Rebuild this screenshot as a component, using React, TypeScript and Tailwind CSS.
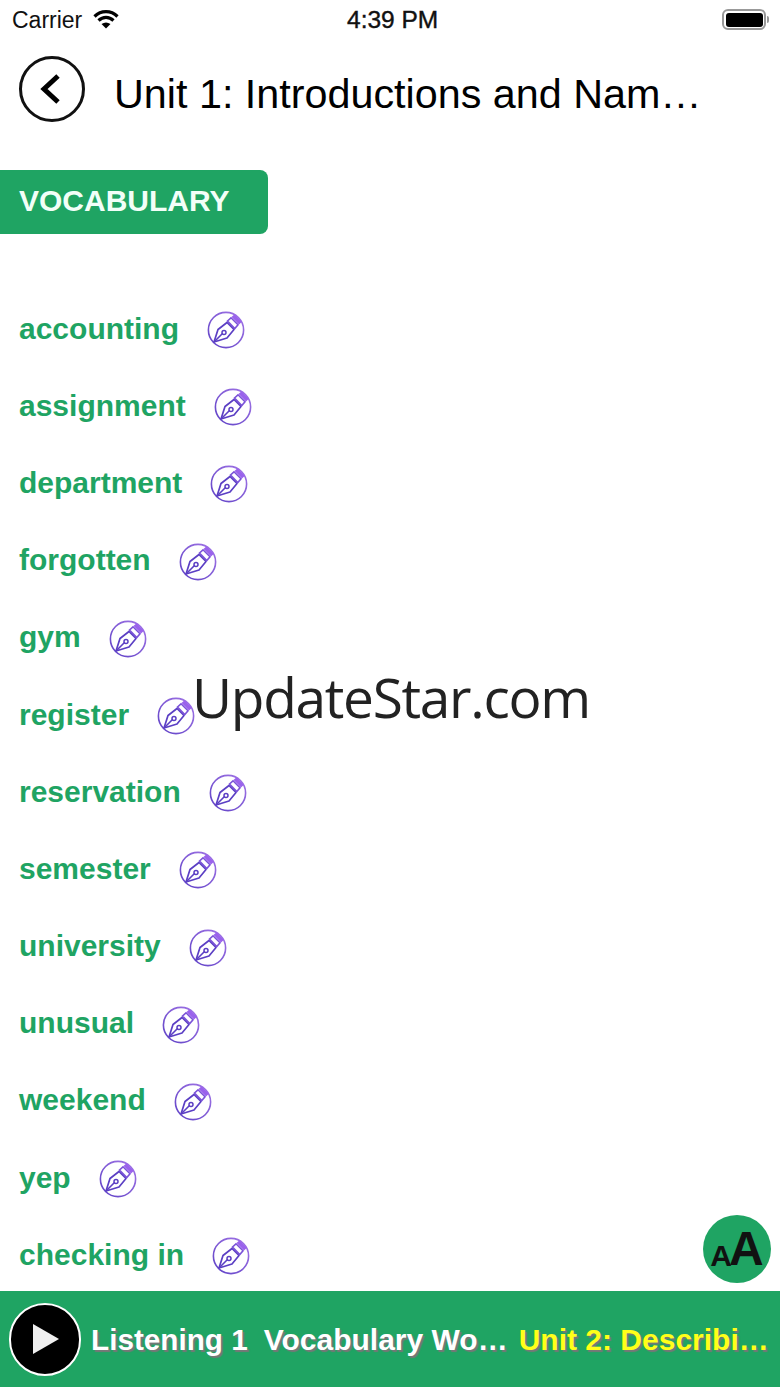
const palabras = [
  'accounting',
  'assignment',
  'department',
  'forgotten',
  'gym',
  'register',
  'reservation',
  'semester',
  'university',
  'unusual',
  'weekend',
  'yep',
  'checking in',
]

function IconoPluma() {
  return (
    <svg width="38" height="38" viewBox="0 0 38 38" fill="none" className="mt-[3px] shrink-0">
      <defs>
        <linearGradient id="pluma" x1="0" y1="38" x2="38" y2="0" gradientUnits="userSpaceOnUse">
          <stop offset="0" stopColor="#5b3fc4" />
          <stop offset="1" stopColor="#a678e8" />
        </linearGradient>
      </defs>
      <circle cx="19" cy="19" r="17.6" stroke="url(#pluma)" strokeWidth="1.6" />
      {/* plumilla */}
      <path
        d="M7 31 L11 18.5 L20 11.5 L27 18.5 L20 27 Z"
        stroke="#5b3fc4"
        strokeWidth="1.7"
        strokeLinejoin="round"
        fill="#fff"
      />
      <path d="M7 31 L15.5 22.5" stroke="#5b3fc4" strokeWidth="1.6" />
      <circle cx="17" cy="21.5" r="2" stroke="#5b3fc4" strokeWidth="1.5" />
      {/* mango */}
      <path d="M20.5 10 L24 6.8 L31 13.8 L27.8 17.5 Z" stroke="#7a52d8" strokeWidth="1.6" fill="#fff" />
      <path d="M24.5 6 L27.5 3.2 L35 10.8 L32 13.6 Z" fill="#9a62ec" />
    </svg>
  )
}

function BarraEstado() {
  return (
    <div className="relative flex h-[40px] items-center justify-between pl-[12px] pr-[11px] text-[23px] leading-[28px] text-[#111]">
      <div className="flex items-center gap-[11px]">
        <span>Carrier</span>
        <svg width="26" height="20" viewBox="0 0 26 20" fill="none" stroke="#000" strokeWidth="3.2" className="-mt-[2px]">
          <path d="M1.5 7.5 C8 1 18 1 24.5 7.5" />
          <path d="M5.5 11.5 C10 7.3 16 7.3 20.5 11.5" />
          <path d="M13 19.5 L8.5 15 Q13 11.8 17.5 15 Z" fill="#000" stroke="none" />
        </svg>
      </div>
      <span className="absolute left-[347px] top-[6px] text-[24.5px] [-webkit-text-stroke:0.4px_#111]">4:39 PM</span>
      <div className="-mt-[1px] flex items-center">
        <div className="flex h-[21px] w-[44px] items-center rounded-[6px] border-2 border-[#999] p-[1.5px]">
          <div className="h-full w-full rounded-[3px] bg-black" />
        </div>
        <div className="ml-[1px] h-[7px] w-[2px] rounded-r bg-[#999]" />
      </div>
    </div>
  )
}

export default function App() {
  return (
    <div className="relative flex h-[1387px] w-[780px] flex-col overflow-hidden bg-white font-['Liberation_Sans',Arial,sans-serif]">
      <BarraEstado />

      {/* Encabezado */}
      <div className="mt-[16px] flex h-[66px] items-center pl-[19px]">
        <button className="flex h-[66px] w-[66px] shrink-0 items-center justify-center rounded-full border-[3px] border-[#111] bg-white">
          <svg width="26" height="36" viewBox="0 0 26 36" fill="none">
            <path d="M19 5 L5 18 L19 31" stroke="#000" strokeWidth="5" />
          </svg>
        </button>
        <h1 className="ml-[29px] mt-[9px] whitespace-nowrap text-[41.3px] leading-[48px] text-black">
          Unit 1: Introductions and Nam…
        </h1>
      </div>

      {/* Etiqueta */}
      <div className="mt-[48px] flex h-[64px] w-[268px] items-center rounded-r-[8px] bg-[#1fa463] pb-[3px] pl-[19px] text-[30px] font-bold text-[#f2fff8]">
        VOCABULARY
      </div>

      {/* Lista */}
      <ul className="mt-[56px] flex flex-col">
        {palabras.map((palabra) => (
          <li key={palabra} className="flex h-[77.2px] items-center gap-[28px] pl-[19px]">
            <span className="text-[30px] leading-[36px] font-bold text-[#1fa463]">{palabra}</span>
            <IconoPluma />
          </li>
        ))}
      </ul>

      {/* Barra inferior */}
      <div className="absolute inset-x-0 bottom-0 flex h-[96px] items-center whitespace-nowrap bg-[#1fa463] pl-[9px] text-[30px] font-bold text-white [text-shadow:2px_2px_1px_#777]">
        <div className="flex h-[73px] w-[72px] shrink-0 items-center justify-center rounded-full border-2 border-white bg-black">
          <svg width="28" height="30" viewBox="0 0 28 30" className="ml-[2px]">
            <path d="M1 0 L27 15 L1 30 Z" fill="#f0f0f0" />
          </svg>
        </div>
        <span className="ml-[10px] mt-[2px] shrink-0 text-[29.7px]">Listening 1</span>
        <span className="ml-[16px] w-[255px] shrink-0">Vocabulary Wo…</span>
        <span className="shrink-0 text-[#ffff19]">Unit 2: Describi…</span>
      </div>

      {/* Boton de tamano de letra */}
      <button className="absolute left-[703px] top-[1215px] flex h-[68px] w-[68px] items-end justify-center rounded-full bg-[#1fa463] pb-[12px] font-bold text-[#111]">
        <span className="text-[30px] leading-[30px]">A</span>
        <span className="-ml-[3px] text-[48px] leading-[44px]">A</span>
      </button>

      {/* Marca de agua */}
      <div className="absolute left-[192px] top-[660px] font-['Open_Sans',sans-serif] text-[55px] leading-[74px] tracking-[-1.3px] text-[#222]">
        UpdateStar.com
      </div>
    </div>
  )
}
